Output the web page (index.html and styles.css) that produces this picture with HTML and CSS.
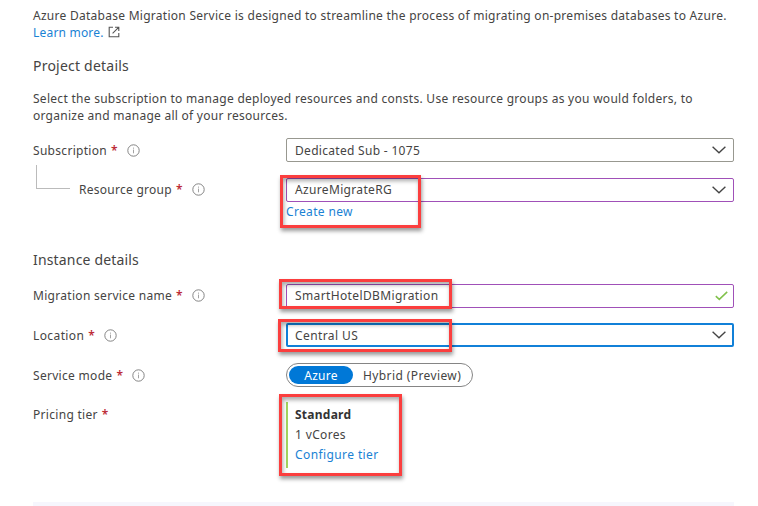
FILE: index.html
```html
<!DOCTYPE html>
<html lang="en">
<head>
<meta charset="utf-8">
<title>Create Migration Service</title>
<link rel="stylesheet" href="styles.css">
</head>
<body>
<svg class="defs" width="0" height="0" aria-hidden="true">
  <symbol id="info" viewBox="0 0 13 13"><circle cx="6.5" cy="6.5" r="5.7" fill="none" stroke="#777" stroke-width=".9"/><path d="M6.5 5.6v3.7M6.5 3.6v1.1" fill="none" stroke="#999" stroke-width=".9"/></symbol>
  <symbol id="chevron" viewBox="0 0 14 8"><path d="M.6.7 7 6.8 13.4.7" fill="none" stroke="#444" stroke-width="1.35"/></symbol>
</svg>
<main class="page">
  <p class="intro"><span class="t-intro">Azure Database Migration Service is designed to streamline the process of migrating on-premises databases to Azure.</span><br><a class="link t-learn">Learn more.</a><svg class="external" viewBox="0 0 12 12"><path d="M5 1.2H1.2v9.6h9.6V7M7 1.2h3.8V5M10.6 1.4 4.6 7.4" fill="none" stroke="#555" stroke-width="1.1"/></svg></p>
  <h2 class="heading project t-project">Project details</h2>
  <p class="description"><span class="t-desc1">Select the subscription to manage deployed resources and consts. Use resource groups as you would folders, to</span><br><span class="t-desc2">organize and manage all of your resources.</span></p>

  <div class="row subscription">
    <div class="label"><span class="t-sub">Subscription</span><b>*</b><svg class="info"><use href="#info"/></svg></div>
    <div class="field"><span class="t-dedicated">Dedicated Sub - 1075</span><svg class="chevron"><use href="#chevron"/></svg></div>
  </div>
  <div class="row group">
    <div class="label"><i class="branch"></i><span class="t-rg">Resource group</span><b>*</b><svg class="info"><use href="#info"/></svg></div>
    <div class="control">
      <div class="field edited"><span class="t-rgval">AzureMigrateRG</span><svg class="chevron"><use href="#chevron"/></svg></div>
      <a class="link create t-create">Create new</a>
      <i class="mark mark-group"></i>
    </div>
  </div>
  <h2 class="heading instance t-instance">Instance details</h2>
  <div class="row name">
    <div class="label"><span class="t-name">Migration service name</span><b>*</b><svg class="info"><use href="#info"/></svg></div>
    <div class="control">
      <div class="field edited"><span class="t-hotel">SmartHotelDBMigration</span><svg class="check" viewBox="0 0 13 10"><path d="M.8 5.1 4.3 8.4 12.2.9" fill="none" stroke="#81c14b" stroke-width="1.5"/></svg></div>
      <i class="mark mark-name"></i>
    </div>
  </div>
  <div class="row location">
    <div class="label"><span class="t-loc">Location</span><b>*</b><svg class="info"><use href="#info"/></svg></div>
    <div class="control">
      <div class="field focused"><span class="t-central">Central US</span><svg class="chevron"><use href="#chevron"/></svg></div>
      <i class="mark mark-location"></i>
    </div>
  </div>
  <div class="row mode">
    <div class="label"><span class="t-mode">Service mode</span><b>*</b><svg class="info"><use href="#info"/></svg></div>
    <div class="toggle"><span class="selected"><span class="t-azure">Azure</span></span><span class="t-hybrid">Hybrid (Preview)</span></div>
  </div>
  <div class="row pricing">
    <div class="label"><span class="t-pricing">Pricing tier</span><b>*</b></div>
    <div class="control tier">
      <strong class="t-standard">Standard</strong>
      <span class="t-cores">1 vCores</span>
      <a class="link t-config">Configure tier</a>
      <i class="mark mark-tier"></i>
    </div>
  </div>
  <div class="divider"></div>
</main>
</body>
</html>
```
FILE: styles.css
```css
* { box-sizing: border-box; }
html, body { margin: 0; width: 758px; height: 506px; overflow: hidden; background: #fff; }
body { font: 12px/17px "Noto Sans", "Open Sans", sans-serif; color: #454443; }
.defs { display: block; }
.page { height: 506px; padding: 7px 24px 0 33px; display: flex; flex-direction: column; }
p, h2 { margin: 0; white-space: nowrap; }
.link { color: #1a82d4; }
.intro { height: 34px; }
.external { width: 12px; height: 12px; margin-left: 4px; vertical-align: -1px; }
.heading { height: 20px; font-size: 14px; line-height: 20px; font-weight: 400; }
.project { margin-top: 15px; }
.description { margin-top: 14px; height: 34px; }
.row { display: grid; grid-template-columns: 253px 448px; height: 24px; flex: none; }
.label { display: flex; align-items: center; height: 24px; white-space: nowrap; }
.label b { color: #bd2c38; font-size: 12px; font-weight: 600; margin-left: 4px; width: 7px; }
.info { width: 13px; height: 13px; margin-left: 9px; }
.subscription { margin-top: 14px; }
.group { margin-top: 16px; }
.group .label, .name .label, .group .field, .name .field { padding-bottom: 1px; }
.instance { margin-top: 48px; }
.name { margin-top: 14px; }
.location { margin-top: 15px; }
.mode { margin-top: 16px; }
.pricing { margin-top: 15px; height: 66px; }
.control { position: relative; }
.field { height: 24px; border: 1px solid #989890; border-radius: 2px; padding: 0 7px 0 8px; display: flex; align-items: center; justify-content: space-between; white-space: nowrap; }
.edited { border-color: #a050b8; }
.focused { border: 2px solid #1180d8; padding: 0 6px 0 7px; }
.chevron { width: 14px; height: 8px; }
.check { width: 13px; height: 10px; margin-right: -2px; }
.create { display: block; margin-top: 1px; }
.branch { width: 34px; height: 24px; margin: -25px 9px 0 3px; border: solid #bbb; border-width: 0 0 1px 1px; }
.toggle { width: 187px; height: 24px; border: 1px solid #858585; border-radius: 12px; padding: 2px; display: flex; align-items: center; white-space: nowrap; }
.selected { width: 64px; height: 18px; border-radius: 9px; background: #0078d7; color: #fff; display: flex; align-items: center; justify-content: center; margin-right: 10px; }
.tier { height: 66px; border-left: 2px solid #a4d45e; padding: 4px 0 0 7px; display: flex; flex-direction: column; align-items: flex-start; gap: 3px; line-height: 17px; white-space: nowrap; }
.tier strong { font-weight: 700; color: #333; }
.mark { position: absolute; border: 3px solid #fb3e3e; box-shadow: 1px 3px 4px #0006, inset 1px 3px 4px #0005; }
.mark-group { left: -6px; top: -3px; width: 141px; height: 53px; }
.mark-name { left: -7px; top: -5px; width: 173px; height: 30px; }
.mark-location { left: -8px; top: -4px; width: 174px; height: 33px; }
.mark-tier { left: -9px; top: -8px; width: 123px; height: 82px; }
.divider { margin-top: 34px; height: 4px; background: #f6f6fd; }

/* Tracking */
.t-intro { letter-spacing: .27px; }
.t-learn { letter-spacing: .2px; }
.t-project { letter-spacing: .22px; }
.t-instance { letter-spacing: .17px; }
.t-desc1 { letter-spacing: .28px; }
.t-desc2 { letter-spacing: .26px; }
.t-sub, .t-name, .t-mode, .t-pricing, .t-dedicated { letter-spacing: .3px; }
.t-rg { letter-spacing: .27px; }
.t-loc, .t-central, .t-hybrid, .t-config { letter-spacing: .4px; }
.t-rgval, .t-create { letter-spacing: .34px; }
.t-hotel { letter-spacing: .37px; }
.t-azure { letter-spacing: .25px; }
.t-standard { letter-spacing: .25px; }
.t-cores { letter-spacing: .35px; }
```
